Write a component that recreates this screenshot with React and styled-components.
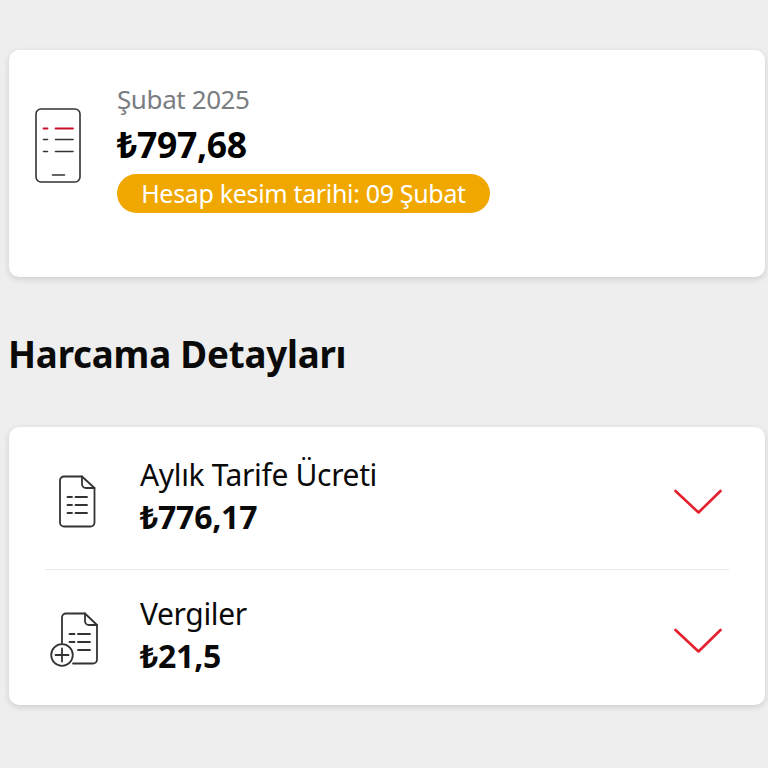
import React from "react";
import styled, { createGlobalStyle } from "styled-components";

const Global = createGlobalStyle`
  html, body { margin: 0; padding: 0; background: #eeeeee; }
  body { font-family: "Noto Sans", "Open Sans", sans-serif; }
`;

const Page = styled.main`
  width: 768px;
  height: 768px;
  box-sizing: border-box;
  padding: 50px 3px 0 9px;
  display: flex;
  flex-direction: column;
  overflow: hidden;
`;

const Card = styled.section`
  background: #fff;
  border-radius: 10px;
  box-shadow: 0 2px 6px rgba(0, 0, 0, 0.14);
`;

const BillCard = styled(Card)`
  height: 227px;
  box-sizing: border-box;
  padding: 32px 0 0 26px;
  display: flex;
  gap: 35px;
`;

const PhoneSlot = styled.div`
  width: 47px;
  padding-top: 26px;
  flex: none;
  svg { display: block; }
`;

const BillInfo = styled.div`
  display: flex;
  flex-direction: column;
  align-items: flex-start;
`;

const Period = styled.div`
  font-size: 26px;
  line-height: 34px;
  letter-spacing: -0.4px;
  color: #7a7d82;
`;

const Total = styled.div`
  font-size: 35.5px;
  font-weight: 700;
  line-height: 44px;
  margin-top: 6px;
  letter-spacing: -0.3px;
  color: #000;
`;

const DueBadge = styled.div`
  margin-top: 8px;
  height: 39px;
  width: 373px;
  box-sizing: border-box;
  border-radius: 20px;
  background: #f0a800;
  color: #fff;
  font-size: 25px;
  line-height: 38px;
  letter-spacing: -0.33px;
  text-align: center;
  white-space: nowrap;
`;

const SectionTitle = styled.h2`
  margin: 52px 0 0 -1px;
  font-size: 36.7px;
  line-height: 50px;
  font-weight: 700;
  letter-spacing: -0.2px;
  color: #0a0a0a;
`;

const DetailsCard = styled(Card)`
  margin-top: 48px;
  height: 278px;
  box-sizing: border-box;
  padding: 0 36px;
  display: flex;
  flex-direction: column;
`;

const Row = styled.div`
  height: ${(p) => p.$height}px;
  flex: none;
  display: flex;
  align-items: center;
  box-sizing: border-box;
  padding: ${(p) => p.$nudge}px 7px 0 ${(p) => p.$iconLeft}px;
  border-bottom: ${(p) => (p.$divider ? "1px solid #e9e9e9" : "none")};
`;

const RowIcon = styled.div`
  width: ${(p) => p.$slot}px;
  flex: none;
  svg { display: block; }
`;

const RowText = styled.div`
  flex: 1;
  display: flex;
  flex-direction: column;
  margin-bottom: 10px;
`;

const RowLabel = styled.div`
  font-size: 30px;
  line-height: 40px;
  letter-spacing: -0.35px;
  color: #0a0a0a;
`;

const RowAmount = styled.div`
  font-size: 32px;
  font-weight: 700;
  line-height: 40px;
  margin-top: 2px;
  letter-spacing: -0.25px;
  color: #0a0a0a;
`;

const ChevronMark = styled.svg`
  display: block;
  flex: none;
  margin-top: 2px;
`;

const Chevron = () => (
  <ChevronMark width="50" height="26" viewBox="0 0 50 26" fill="none">
    <path d="M3.5 2 L26.5 23.5 L48.5 2" stroke="#e3202c" strokeWidth="2.6" strokeLinejoin="round" strokeLinecap="round" />
  </ChevronMark>
);

const PhoneIcon = () => (
  <svg width="47" height="76" viewBox="0 0 47 76" fill="none" stroke="#333" strokeWidth="1.6" strokeLinecap="round">
    <rect x="1" y="1" width="44" height="73" rx="5" />
    <path d="M8.5 20.5h4M20.5 20.5h17.5" stroke="#c8102e" strokeWidth="1.8" />
    <path d="M8.5 31.5h4M20.5 31.5h17.5M8.5 43.5h4M20.5 43.5h17.5M17.5 67h12" />
  </svg>
);

const DocIcon = () => (
  <svg width="38" height="53" viewBox="0 0 38 53" fill="none" stroke="#333" strokeWidth="1.8" strokeLinecap="round" strokeLinejoin="round">
    <path d="M6 1.5h18L36.5 13v34.5a4 4 0 0 1-4 4H6a4 4 0 0 1-4-4V5.5a4 4 0 0 1 4-4Z" />
    <path d="M24 1.5V9a4 4 0 0 0 4 4h8.5" />
    <path d="M9.5 22h4.5M17.5 22h11.5M9.5 30h4.5M17.5 30h11.5M9.5 38h4.5M17.5 38h11.5" />
  </svg>
);

const DocPlusIcon = () => (
  <svg width="48" height="55" viewBox="0 0 48 55" fill="none" stroke="#333" strokeWidth="1.8" strokeLinecap="round" strokeLinejoin="round">
    <path d="M12 31V5.5a4 4 0 0 1 4-4h19L47 13v34.5a4 4 0 0 1-4 4H23" />
    <path d="M35 1.5V9a4 4 0 0 0 4 4h8" />
    <path d="M19.5 22h5M28 22h12M19.5 30h5M28 30h12M28 38h12" />
    <circle cx="12" cy="43" r="10.8" />
    <path d="M12 36.5v13M5.5 43h13" />
  </svg>
);

export default function App() {
  return (
    <>
      <Global />
      <Page>
        <BillCard>
          <PhoneSlot>
            <PhoneIcon />
          </PhoneSlot>
          <BillInfo>
            <Period>Şubat 2025</Period>
            <Total>₺797,68</Total>
            <DueBadge>Hesap kesim tarihi: 09 Şubat</DueBadge>
          </BillInfo>
        </BillCard>
        <SectionTitle>Harcama Detayları</SectionTitle>
        <DetailsCard>
          <Row $divider $height={143} $nudge={6} $iconLeft={13}>
            <RowIcon $slot={82}><DocIcon /></RowIcon>
            <RowText>
              <RowLabel>Aylık Tarife Ücreti</RowLabel>
              <RowAmount>₺776,17</RowAmount>
            </RowText>
            <Chevron />
          </Row>
          <Row $height={135} $nudge={4} $iconLeft={5}>
            <RowIcon $slot={90}><DocPlusIcon /></RowIcon>
            <RowText>
              <RowLabel>Vergiler</RowLabel>
              <RowAmount>₺21,5</RowAmount>
            </RowText>
            <Chevron />
          </Row>
        </DetailsCard>
      </Page>
    </>
  );
}
